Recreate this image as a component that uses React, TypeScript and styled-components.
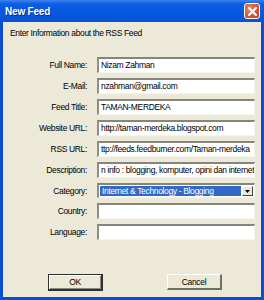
import styled, { createGlobalStyle } from 'styled-components';

const GlobalStyle = createGlobalStyle`
  html, body {
    margin: 0;
    padding: 0;
    background: #ece9d8;
  }
`;

const fields = [
  { label: 'Full Name:', value: 'Nizam Zahman' },
  { label: 'E-Mail:', value: 'nzahman@gmail.com' },
  { label: 'Feed Title:', value: 'TAMAN-MERDEKA' },
  { label: 'Website URL:', value: 'http://taman-merdeka.blogspot.com' },
  { label: 'RSS URL:', value: 'ttp://feeds.feedburner.com/Taman-merdeka' },
  { label: 'Description:', value: 'n info : blogging, komputer, opini dan internet' },
];

const App = () => {
  return (
    <>
      <GlobalStyle />
      <Window>
        <TitleBar>
          <Title>New Feed</Title>
          <CloseButton>
            <svg width="9" height="9" viewBox="0 0 9 9">
              <path d="M1 1 L8 8 M8 1 L1 8" stroke="#fff" strokeWidth="2" strokeLinecap="square" />
            </svg>
          </CloseButton>
        </TitleBar>
        <Client>
          <Intro>Enter Information about the RSS Feed</Intro>
          <Form>
            {fields.map((f) => (
              <Row key={f.label}>
                <Label>{f.label}</Label>
                <TextBox>{f.value}</TextBox>
              </Row>
            ))}
            <Row>
              <Label>Category:</Label>
              <Combo>
                <Selected>Internet &amp; Technology - Blogging</Selected>
                <DropButton>
                  <svg width="5" height="3" viewBox="0 0 5 3">
                    <path d="M0 0 H5 L2.5 3 Z" fill="#000" />
                  </svg>
                </DropButton>
              </Combo>
            </Row>
            <Row>
              <Label>Country:</Label>
              <TextBox />
            </Row>
            <Row>
              <Label>Language:</Label>
              <TextBox />
            </Row>
          </Form>
          <Buttons>
            <Button $default>OK</Button>
            <Button>Cancel</Button>
          </Buttons>
        </Client>
      </Window>
    </>
  );
};

export default App;

const font = `"Liberation Sans", Arial, sans-serif`;

const Window = styled.div`
  width: 264px;
  height: 300px;
  box-sizing: border-box;
  display: flex;
  flex-direction: column;
  background: #0b4fd0;
  padding: 0 3px 3px 3px;
  font-family: ${font};
  font-size: 8.5px;
  letter-spacing: -0.35px;
  color: #000;
`;

const TitleBar = styled.div`
  height: 22px;
  margin: 0 -3px;
  padding: 0 4px 0 5px;
  display: flex;
  align-items: center;
  justify-content: space-between;
  background: linear-gradient(
    to bottom,
    #3b86f0 0%,
    #0d5ce6 18%,
    #0658e0 60%,
    #0a52d4 100%
  );
`;

const Title = styled.span`
  color: #fff;
  font-weight: bold;
  font-size: 10px;
  letter-spacing: -0.2px;
  text-shadow: 1px 1px 0 #0a2f8c;
`;

const CloseButton = styled.div`
  width: 14px;
  height: 14px;
  border: 1px solid #fff;
  border-radius: 3px;
  background: radial-gradient(circle at 35% 35%, #e98a66 0%, #d9532a 60%, #c13c12 100%);
  display: flex;
  align-items: center;
  justify-content: center;
`;

const Client = styled.div`
  flex: 1;
  display: flex;
  flex-direction: column;
  background: #ece9d8;
  padding: 5px 6px 6px 7px;
`;

const Intro = styled.div`
  line-height: 12px;
`;

const Form = styled.div`
  margin-top: 18px;
  display: flex;
  flex-direction: column;
  gap: 5px;
`;

const Row = styled.div`
  display: grid;
  grid-template-columns: 77px 158px;
  column-gap: 10px;
  align-items: center;
`;

const Label = styled.span`
  text-align: right;
  white-space: nowrap;
`;

const TextBox = styled.div`
  height: 16px;
  box-sizing: border-box;
  background: #fff;
  border-top: 2px solid #85857c;
  border-left: 2px solid #8e8e86;
  border-right: 1px solid #f4f3ee;
  border-bottom: 1px solid #f4f3ee;
  padding: 0 2px;
  line-height: 13px;
  white-space: nowrap;
  overflow: hidden;
`;

const Combo = styled(TextBox)`
  height: 15px;
  display: flex;
  align-items: stretch;
  padding: 1px;
  line-height: 10px;
  gap: 1px;
`;

const Selected = styled.span`
  flex: 1;
  background: #3169c6;
  color: #fff;
  padding: 0 2px;
  overflow: hidden;
`;

const DropButton = styled.span`
  width: 11px;
  box-sizing: border-box;
  background: #ece9d8;
  border-top: 1px solid #fff;
  border-left: 1px solid #fff;
  border-right: 1px solid #404040;
  border-bottom: 1px solid #404040;
  display: flex;
  align-items: center;
  justify-content: center;
`;

const Buttons = styled.div`
  margin-top: auto;
  display: flex;
  align-items: flex-start;
  gap: 64px;
  padding-left: 38px;
`;

const Button = styled.div<{ $default?: boolean }>`
  width: 55px;
  height: ${(p) => (p.$default ? 17 : 16)}px;
  box-sizing: border-box;
  display: flex;
  align-items: center;
  justify-content: center;
  background: #ece9d8;
  border-top: 1px solid ${(p) => (p.$default ? '#303030' : '#fff')};
  border-left: 1px solid ${(p) => (p.$default ? '#303030' : '#fff')};
  border-right: 2px solid ${(p) => (p.$default ? '#303030' : '#6f6f68')};
  border-bottom: 2px solid ${(p) => (p.$default ? '#303030' : '#6f6f68')};
  box-shadow: ${(p) => (p.$default ? 'inset 1px 1px 0 #fff, inset -1px -1px 0 #8a8a82' : 'none')};
`;
